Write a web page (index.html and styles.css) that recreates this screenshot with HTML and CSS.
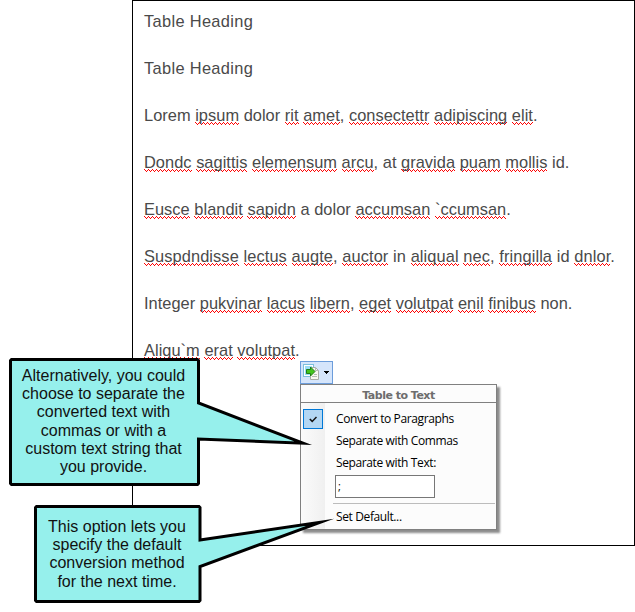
FILE: index.html
```html
<!DOCTYPE html>
<html lang="en">
<head>
<meta charset="utf-8">
<title>Table to Text</title>
<link rel="stylesheet" href="styles.css">
</head>
<body>
<main class="page">
  <p class="heading">Table Heading</p>
  <p class="heading">Table Heading</p>
  <p>Lorem <u>ipsum</u> dolor <u>rit</u> <u>amet</u>, <u>consectettr</u> <u>adipiscing</u> <u>elit</u>.</p>
  <p><u>Dondc</u> <u>sagittis</u> <u>elemensum</u> <u>arcu</u>, at <u>gravida</u> <u>puam</u> <u>mollis</u> id.</p>
  <p><u>Eusce</u> <u>blandit</u> <u>sapidn</u> a dolor <u>accumsan</u> <u>`ccumsan</u>.</p>
  <p class="wide"><u>Suspdndisse</u> <u>lectus</u> <u>augte</u>, <u>auctor</u> in <u>aliqual</u> <u>nec</u>, <u>fringilla</u> id <u>dnlor</u>.</p>
  <p>Integer <u>pukvinar</u> <u>lacus</u> <u>libern</u>, <u>eget</u> <u>volutpat</u> <u>enil</u> <u>finibus</u> non.</p>
  <p><u>Aliqu`m</u> <u>erat</u> <u>volutpat</u>.</p>
</main>

<div class="options">
  <button class="trigger" aria-label="Table to Text options">
    <svg width="17" height="17" viewBox="0 0 17 17">
      <rect x=".5" y=".5" width="10" height="12" fill="#fff" stroke="#7cbfdc"/>
      <rect x="2" y="2" width="7" height="9" fill="#9bdcf5"/>
      <path d="M8.500 3.500h4l3 3v9h-8v-4" fill="#f8f8f2" stroke="#a9ada6"/>
      <path d="M12.500 3.500v3h3M11 10.500h3M9 12.500h5" fill="none" stroke="#b4bcb6"/>
      <path d="M3.500 5.500h4v-2.500l4.500 4.500-4.500 4.500v-2.500h-4z" fill="#43c51d" stroke="#217b16"/>
    </svg>
    <svg width="5" height="3" viewBox="0 0 5 3" shape-rendering="crispEdges"><path d="M0 0h5v1H4v1H3v1H2V2H1V1H0z"/></svg>
  </button>
  <div class="menu">
    <div class="title">Table to Text</div>
    <div class="items">
      <div class="check"><svg width="8" height="7" viewBox="0 0 8 7"><path d="M.8 3l2.400 2.400L7.500 1" fill="none" stroke="#111" stroke-width="1.500"/></svg></div>
      <div class="item paragraphs">Convert to Paragraphs</div>
      <div class="item commas">Separate with Commas</div>
      <div class="item custom">Separate with Text:</div>
      <div class="field">;</div>
      <div class="rule"></div>
      <div class="item default">Set Default...</div>
    </div>
  </div>
</div>

<svg class="balloons" width="635" height="612" viewBox="0 0 635 612">
  <path d="M11.500 359.500H197.500L198.500 360.500V403L303 443.200 198.500 439V483.500L197.500 484.500H11.500L10.500 483.500V360.500z"/>
  <path d="M36.500 506.500H199L200 507.500V540L320 522.300 200 566.500V600.500L199 601.500H36.500L35.500 600.500V507.500z"/>
</svg>
<div class="note note-text">Alternatively, you could<br>choose to separate the<br>converted text with<br>commas or with a<br>custom text string that<br>you provide.</div>
<div class="note note-default">This option lets you<br>specify the default<br>conversion method<br>for the next time.</div>
</body>
</html>
```
FILE: styles.css
```css
* { box-sizing: border-box; }
body { margin: 0; width: 635px; height: 612px; position: relative; overflow: hidden; background: #fff; font-family: "Liberation Sans", Arial, sans-serif; }
.page { margin-left: 132px; width: 503px; height: 546px; border: 1px solid #000; padding: 10px 0 0 11px; color: #4a4a4a; font-size: 16.400px; letter-spacing: .03px; white-space: nowrap; }
.page p { margin: 0 0 27px; line-height: 20px; }
.page .heading { letter-spacing: .33px; }
.page .wide { letter-spacing: .09px; }
.page u {
  text-decoration: none;
  padding-bottom: 1px;
  background:
    repeating-linear-gradient(90deg, red 0 1px, transparent 1px 4px) 0 calc(100% - 2px) / 100% 1px no-repeat,
    repeating-linear-gradient(90deg, transparent 0 1px, red 1px 2px) 0 calc(100% - 1px) / 100% 1px no-repeat,
    repeating-linear-gradient(90deg, transparent 0 2px, red 2px 3px, transparent 3px 4px) 0 100% / 100% 1px no-repeat;
}
.options { position: absolute; left: 300px; top: 361px; width: 197px; }
.trigger { display: flex; align-items: center; gap: 4px; width: 33px; height: 23px; padding: 0 0 0 2px; border: 1px solid #6c9ddb; background: #d5e5fb; }
.menu { height: 146px; border: 1px solid #808080; background: #fcfcfc; box-shadow: 3px 3px 2px rgba(0,0,0,.45); }
.title { height: 18px; border-bottom: 1px solid #808080; text-align: center; color: #6d6d6d; font: bold 11px/21px "DejaVu Sans", sans-serif; letter-spacing: -.5px; }
.items { display: grid; grid-template: 10px 22px 22px 22px 24px 6px 1fr / 32px 1fr; height: 126px; color: #000; font: 12px/22px "Open Sans", "Noto Sans", sans-serif; letter-spacing: -.38px; background: linear-gradient(90deg, #fbfbfb, #f0f0f0) 0 0 / 24px 126px no-repeat; }
.check { grid-area: 1 / 1 / 3 / 2; width: 20px; height: 20px; margin: 6px 0 0 2px; border: 1px solid #0078d7; background: #b3d7f3; display: grid; place-items: center; }
.item, .field, .rule { grid-column: 2; }
.item { padding-left: 3px; white-space: nowrap; }
.paragraphs { grid-row: 1 / 3; margin-top: 5px; }
.commas { grid-row: 3; margin-top: -5px; }
.custom { grid-row: 4; margin-top: -5px; }
.field { grid-row: 5; width: 100px; height: 23px; margin: -4px 0 0 2px; border: 1px solid #777; background: #fff; padding-left: 2px; line-height: 20px; font-size: 11px; }
.rule { grid-row: 6; margin-right: 1px; border-top: 1px solid #bcbcbc; }
.default { grid-row: 7; margin-top: -3px; }
.balloons { position: absolute; left: 0; top: 0; fill: #96f0ec; stroke: #000; stroke-width: 3; stroke-miterlimit: 12; }
.note { position: absolute; text-align: center; color: #111; font-size: 16px; line-height: 18.200px; white-space: nowrap; }
.note-text { left: 10px; top: 367px; width: 187px; }
.note-default { left: 36px; top: 518px; width: 162px; }
```
